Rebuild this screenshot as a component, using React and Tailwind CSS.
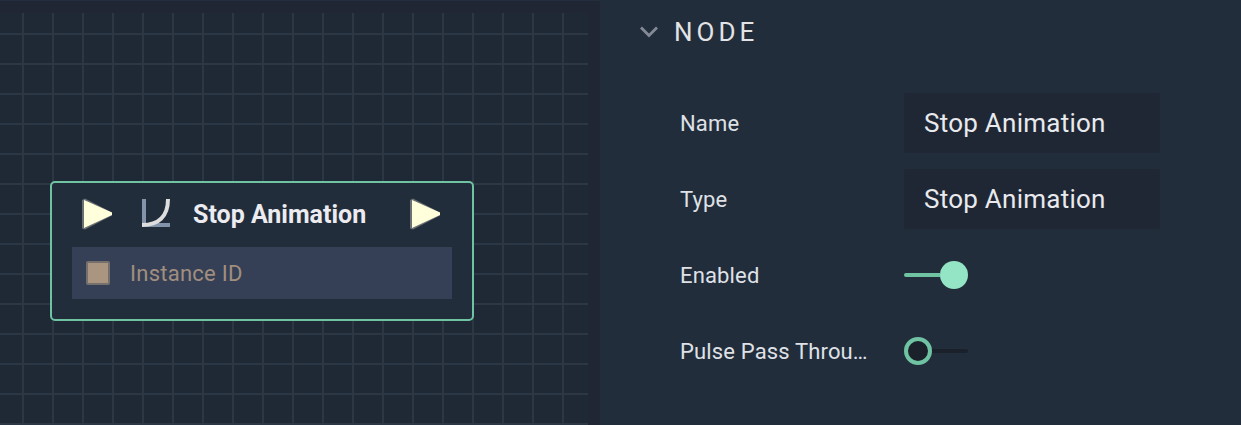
import React from "react";

function PulseArrow() {
  return (
    <svg width="32" height="32" viewBox="0 0 32 32" className="block shrink-0">
      <path d="M0 2 L3 0.5 L30 14.5 V17.5 L3 31.5 L0 30.5 Z" fill="#6b7072" />
      <path d="M2 2 L30 14.5 V17 L2 30 Z" fill="#ffffdc" />
    </svg>
  );
}

function CurveIcon() {
  return (
    <svg width="28" height="28" viewBox="0 0 28 28" className="block shrink-0">
      <path d="M0 0H4V24H28V28H0Z" fill="#8393aa" />
      <path d="M0 26 C16 26 26 18 26 0" fill="none" stroke="#dedede" strokeWidth="4" />
    </svg>
  );
}

function NodeCard() {
  return (
    <div className="h-[140px] w-[424px] rounded-[5px] border-2 border-[#6fc3a3] bg-[#222d3c] px-5">
      <div className="flex h-16 items-center pb-0.5 pl-[10px]">
        <PulseArrow />
        <div className="mb-0.5 ml-7">
          <CurveIcon />
        </div>
        <span className="mt-0.5 ml-[23px] w-[217px] whitespace-nowrap text-[25px] leading-8 font-bold text-[#ececf0]">
          Stop Animation
        </span>
        <PulseArrow />
      </div>
      <div className="flex h-[52px] items-center bg-[#354057] pl-[14px]">
        <div className="size-6 rounded-[2px] border-2 border-[#76706d] bg-[#a99580]" />
        <span className="mt-0.5 ml-5 text-[22px] leading-8 tracking-[0.25px] text-[#a18e7e]">Instance ID</span>
      </div>
    </div>
  );
}

function Row({ label, children }) {
  return (
    <div className="flex h-[60px] items-center">
      <div className="mt-0.5 w-[188px] whitespace-nowrap text-[22px] leading-8 tracking-[0.15px] text-[#dfe1e6]">
        {label}
      </div>
      <div className="ml-9">{children}</div>
    </div>
  );
}

function Field({ value }) {
  return (
    <div className="flex h-[60px] w-64 items-center rounded-[2px] bg-[#1f2735] px-5 text-[26px] tracking-[0.25px] text-[#e9eaee]">
      {value}
    </div>
  );
}

function Toggle({ on }) {
  return on ? (
    <div className="flex w-16 items-center">
      <div className="h-1 flex-1 rounded-l-full bg-[#6fc3a3]" />
      <div className="size-7 rounded-full bg-[#93e5c5]" />
    </div>
  ) : (
    <div className="flex w-16 items-center">
      <div className="size-7 rounded-full border-4 border-[#6fc3a3] bg-[#1a212a]" />
      <div className="h-1 flex-1 rounded-r-full bg-[#1a212a]" />
    </div>
  );
}

export default function App() {
  return (
    <div className="flex h-[425px] w-[1241px] overflow-hidden bg-[#222d3c] font-['Roboto',sans-serif]">
      <div className="w-[600px] shrink-0 border-t border-[#222d3d] bg-[#202633] pt-3">
        <div className="h-[412px] w-[588px] bg-[#1f2835] bg-[linear-gradient(to_right,#2b3744_2px,transparent_2px),linear-gradient(to_bottom,#2b3744_2px,transparent_2px)] bg-size-[30px_30px] bg-position-[22px_20px] pt-[168px] pl-[50px]">
          <NodeCard />
        </div>
      </div>
      <div className="flex-1">
        <div className="flex h-[62px] items-center pl-10">
          <svg width="18" height="12" viewBox="0 0 18 12" className="mt-0.5 block">
            <path d="M1 1.5 L9 9.5 L17 1.5" fill="none" stroke="#848996" strokeWidth="2.8" />
          </svg>
          <span className="mt-0.5 ml-4 text-[26px] tracking-[4px] text-[#e3e3e5]">NODE</span>
        </div>
        <div className="mt-[31px] flex flex-col gap-4 pl-20">
          <Row label="Name"><Field value="Stop Animation" /></Row>
          <Row label="Type"><Field value="Stop Animation" /></Row>
          <Row label="Enabled"><Toggle on /></Row>
          <Row label="Pulse Pass Throu…"><Toggle /></Row>
        </div>
      </div>
    </div>
  );
}
